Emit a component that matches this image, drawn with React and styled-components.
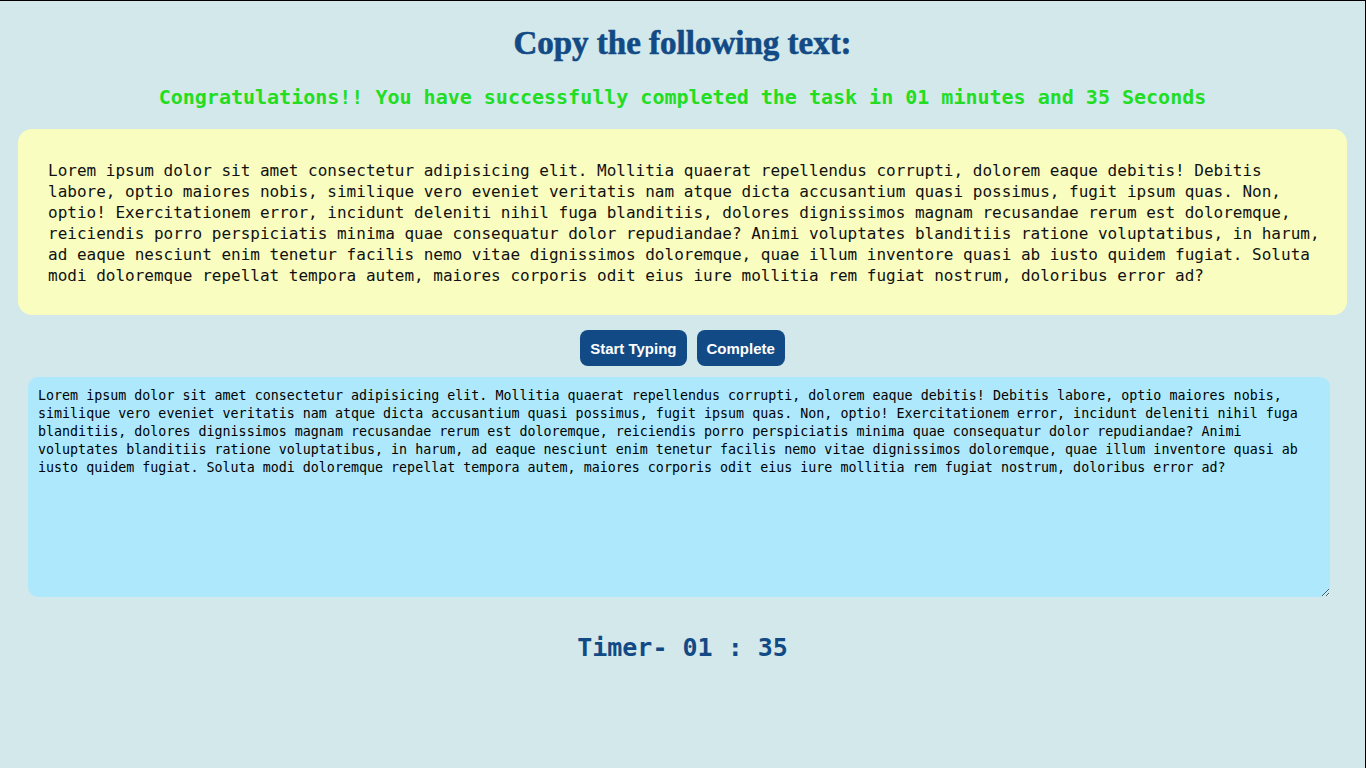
import React from "react";
import styled, { createGlobalStyle } from "styled-components";

const GlobalStyle = createGlobalStyle`
  html {
    border-top: 1px solid #000;
    border-right: 1px solid #000;
    background: #d2e8ea;
    min-height: 100%;
  }
  body {
    margin: 0;
    background: #d2e8ea;
    min-height: 767px;
  }
`;

const LOREM =
  "Lorem ipsum dolor sit amet consectetur adipisicing elit. Mollitia quaerat repellendus corrupti, dolorem eaque debitis! Debitis labore, optio maiores nobis, similique vero eveniet veritatis nam atque dicta accusantium quasi possimus, fugit ipsum quas. Non, optio! Exercitationem error, incidunt deleniti nihil fuga blanditiis, dolores dignissimos magnam recusandae rerum est doloremque, reiciendis porro perspiciatis minima quae consequatur dolor repudiandae? Animi voluptates blanditiis ratione voluptatibus, in harum, ad eaque nesciunt enim tenetur facilis nemo vitae dignissimos doloremque, quae illum inventore quasi ab iusto quidem fugiat. Soluta modi doloremque repellat tempora autem, maiores corporis odit eius iure mollitia rem fugiat nostrum, doloribus error ad?";

const Page = styled.div`
  display: flex;
  flex-direction: column;
  align-items: stretch;
`;

const Title = styled.h1`
  margin: 22px 0 0;
  text-align: center;
  font-family: "Liberation Serif", serif;
  font-weight: 700;
  font-size: 33px;
  line-height: 40px;
  color: #124a85;
  -webkit-text-stroke: 0.6px #124a85;
`;

const Message = styled.h3`
  margin: 22px 0 0;
  text-align: center;
  font-family: "DejaVu Sans Mono", monospace;
  font-weight: 700;
  font-size: 20px;
  line-height: 24px;
  color: #22dd22;
`;

const Quote = styled.p`
  margin: 20px 18px 0;
  padding: 31px 24px 29px 30px;
  background: #f9fdc0;
  border-radius: 14px;
  font-family: "DejaVu Sans Mono", monospace;
  font-size: 16px;
  line-height: 21px;
  color: #111;
`;

const Actions = styled.div`
  display: flex;
  justify-content: center;
  gap: 10px;
  margin-top: 15px;
`;

const Button = styled.button`
  height: 36px;
  padding: 0 10px;
  border: none;
  border-radius: 8px;
  background: #124a85;
  color: #fff;
  font-family: "Liberation Sans", Arial, sans-serif;
  font-weight: 700;
  font-size: 15px;
  cursor: pointer;
`;

const Input = styled.textarea`
  display: block;
  box-sizing: border-box;
  width: calc(100% - 63px);
  height: 220px;
  margin: 11px 0 0 28px;
  padding: 10px;
  border: none;
  border-radius: 10px;
  outline: none;
  background: #aee8fc;
  font-family: "DejaVu Sans Mono", monospace;
  font-size: 13.33px;
  line-height: 18px;
  color: #000;
`;

const Timer = styled.h2`
  margin: 36px 0 0;
  text-align: center;
  font-family: "DejaVu Sans Mono", monospace;
  font-weight: 700;
  font-size: 25px;
  line-height: 30px;
  color: #124a85;
`;

export default function App() {
  return (
    <>
      <GlobalStyle />
      <Page>
        <Title>Copy the following text:</Title>
        <Message>
          Congratulations!! You have successfully completed the task in 01
          minutes and 35 Seconds
        </Message>
        <Quote>{LOREM}</Quote>
        <Actions>
          <Button>Start Typing</Button>
          <Button>Complete</Button>
        </Actions>
        <Input defaultValue={LOREM} />
        <Timer>Timer- 01 : 35</Timer>
      </Page>
    </>
  );
}
